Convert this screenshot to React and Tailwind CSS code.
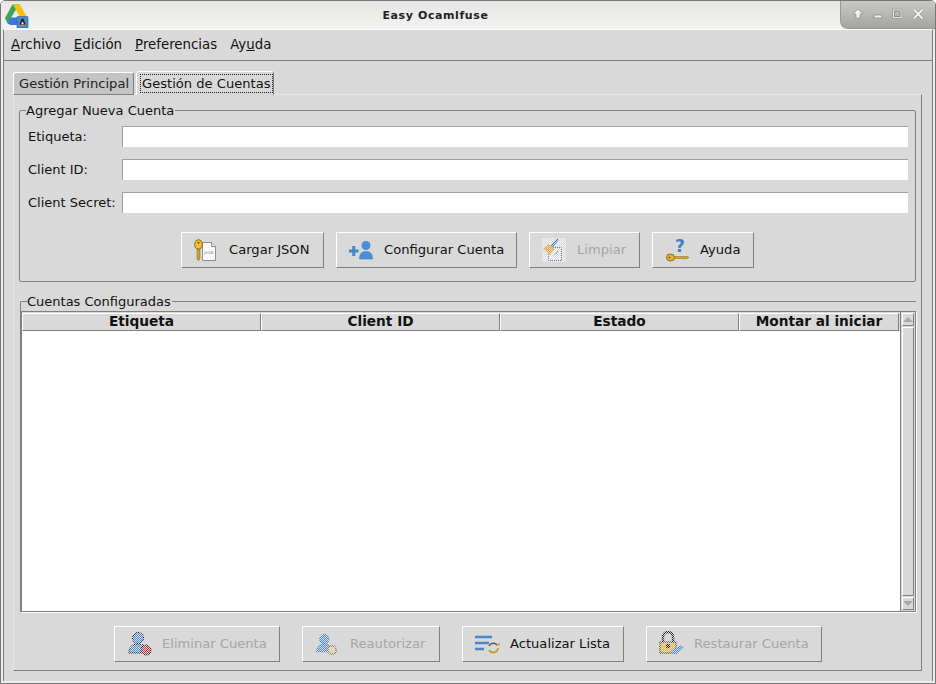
import React from "react";

function Dither({ id }) {
  return (
    <defs>
      <pattern id={id + "p"} width="2" height="2" patternUnits="userSpaceOnUse">
        <rect width="1" height="1" fill="#fff" />
        <rect x="1" y="1" width="1" height="1" fill="#fff" />
      </pattern>
      <mask id={id} maskUnits="userSpaceOnUse" x="0" y="0" width="26" height="26">
        <rect width="26" height="26" fill={`url(#${id}p)`} />
      </mask>
    </defs>
  );
}

function KeyJsonIcon() {
  return (
    <svg width="26" height="22" viewBox="0 0 26 22">
      <path d="M8.500 3.500h9l4 4v14h-13z" fill="#fafafa" stroke="#8f8f8f" />
      <path d="M17.500 3.500v4h4" fill="#e4e4e4" stroke="#8f8f8f" />
      <text x="10" y="14.500" fontSize="3.800" fill="#777" fontFamily="DejaVu Sans">JSON</text>
      <ellipse cx="4.500" cy="5.500" rx="3.800" ry="4.800" fill="#f2c230" stroke="#8a6a10" />
      <circle cx="4.500" cy="3.800" r="1.100" fill="#7a5a10" />
      <path d="M3.200 10h2.600v10l-1.300 1.500-1.300-1.500z" fill="#d9a520" stroke="#8a6a10" strokeWidth=".7" />
    </svg>
  );
}

function AddUserIcon() {
  return (
    <svg width="26" height="20" viewBox="0 0 26 20">
      <path d="M1 11h9.500M5.750 6v10" stroke="#3f86cc" strokeWidth="3" />
      <circle cx="18" cy="5.500" r="4.500" fill="#4a90d9" />
      <path d="M11.500 19c0-5 2-7.500 6.500-7.500s6.500 2.500 6.500 7.500z" fill="#4a90d9" stroke="#3b7dc0" strokeWidth=".6" />
    </svg>
  );
}

function BroomIcon() {
  return (
    <svg width="26" height="26" viewBox="0 0 26 26">
      <Dither id="dm1" />
      <rect width="24" height="24" x="1" y="1" fill="#f4f4f4" mask="url(#dm1)" />
      <g mask="url(#dm1)">
        <path d="M7.500 10.500h13v13h-13z" fill="#fff" stroke="#4a90d9" />
        <path d="M17 2 10 10" stroke="#2a70c0" strokeWidth="2.600" />
        <path d="M2 12l6-5 6 5-5 6z" fill="#e8a81c" />
        <path d="M12 20l5-6" stroke="#4a90d9" />
      </g>
    </svg>
  );
}

function HelpKeyIcon() {
  return (
    <svg width="24" height="26" viewBox="0 0 24 26">
      <text x="9" y="14.500" fontSize="17" fontWeight="700" fill="#3c7fc4" fontFamily="DejaVu Sans">?</text>
      <ellipse cx="4.500" cy="20.500" rx="4" ry="3.500" fill="#eab42a" stroke="#8a6a10" />
      <circle cx="3.500" cy="20.500" r="1" fill="#7a5a10" />
      <path d="M8.500 19.500h12.500l2 1-1 1-2-.3-1 1-1-.8-1 .8-1-.8H8.500z" fill="#d9a520" stroke="#8a6a10" strokeWidth=".5" />
    </svg>
  );
}

function DisabledUserIcon({ id, badge, small }) {
  const line = small ? "#3a6ea5" : "#111";
  return (
    <svg width="26" height="26" viewBox="0 0 26 26">
      <Dither id={id} />
      <g mask={`url(#${id})`}>
        <g transform={small ? "translate(1 2) scale(.85)" : "translate(0 0)"}>
          <circle cx="11" cy="7" r="5.500" fill="#4a90d9" stroke={line} />
          <path d="M2 22c0-6 3-9 9-9s9 3 9 9z" fill="#4a90d9" stroke={line} />
          {badge === "del" ? (
            <circle cx="19" cy="19" r="5" fill="#d03030" stroke="#111" />
          ) : (
            <circle cx="20" cy="20" r="5" fill="#d9d9d9" stroke="#a07a20" strokeWidth="2" />
          )}
        </g>
      </g>
    </svg>
  );
}

function RefreshListIcon() {
  return (
    <svg width="26" height="20" viewBox="0 0 26 20">
      <path d="M1 3h17M1 9h14M1 15h9" stroke="#4a88cc" strokeWidth="2.400" />
      <path d="M15 12a4.800 4.800 0 0 1 8-1" fill="none" stroke="#555" strokeWidth="1.500" />
      <path d="M24 14a4.800 4.800 0 0 1-9 2" fill="none" stroke="#c99a2e" strokeWidth="1.800" />
      <path d="M22 11.500h3.500v-3z" fill="#c99a2e" />
    </svg>
  );
}

function LockIcon() {
  return (
    <svg width="26" height="26" viewBox="0 0 26 26">
      <Dither id="dm4" />
      <g mask="url(#dm4)">
        <path d="M5 11V6a5 5 0 0 1 10 0v5" fill="none" stroke="#222" strokeWidth="2.400" />
        <rect x="2" y="11" width="16" height="11" fill="#efbe2c" stroke="#222" />
        <circle cx="10" cy="15" r="2.200" fill="#111" />
        <path d="M13 20l5 4 8-8-4-2-4 4-2-1z" fill="#4a90d9" />
      </g>
    </svg>
  );
}

function DriveLogo() {
  return (
    <svg width="24" height="24" viewBox="0 0 24 24">
      <path d="M7.500 .5h6.500L5.500 14.500 2.500 19.500 0 14z" fill="#3fa45b" />
      <path d="M8 .5h7l7 12.500h-7z" fill="#f4c20d" />
      <path d="M5.500 13.500H13v7.500H5.500L2.500 19.500z" fill="#3b78d8" />
      <rect x="12" y="12.500" width="11" height="11.500" rx=".5" fill="#4a88cc" stroke="#2d5f9c" strokeWidth=".6" />
      <path d="M17.500 14.500c1.200 0 1.500 1 1.500 2l1.500 3.500-1 1h-4l-1-1 1.500-3.500c0-1 .3-2 1.500-2z" fill="#222" />
      <path d="M17.500 17.500l1.500 2.500h-3z" fill="#fff" />
      <path d="M15.500 20.500h4v1h-4z" fill="#f0b020" />
    </svg>
  );
}

// icons are dithered, so they have to land on whole pixels: padded from the left, not centered
function ActionButton({ icon, label, disabled, className }) {
  return (
    <button
      className={`h-9 shrink-0 flex items-center whitespace-nowrap border border-t-white border-l-white border-r-[#808080] border-b-[#808080] ${className} ${
        disabled ? "text-[#a6a6a6]" : "text-[#111]"
      }`}
    >
      <span className="w-[26px] flex items-center justify-center">{icon}</span>
      <span>{label}</span>
    </button>
  );
}

function Field({ label }) {
  return (
    <div className="flex items-center h-[21px]">
      <label className="w-[94px] shrink-0 whitespace-nowrap text-[13px] text-[#111]">{label}</label>
      <input
        readOnly
        className="h-[21px] w-[786px] shrink-0 bg-white border-t border-l border-t-[#a0a0a0] border-l-[#a0a0a0]"
      />
    </div>
  );
}

function HeaderCell({ label, className }) {
  return (
    <div
      className={`h-[18px] shrink-0 flex items-center justify-center whitespace-nowrap font-bold text-[13.7px] text-[#111] border border-t-white border-l-white border-r-[#808080] border-b-[#808080] ${className}`}
    >
      {label}
    </div>
  );
}

export default function App() {
  return (
    <div className="w-[936px] h-[684px] flex flex-col bg-[#ececea] border border-[#777777] rounded-t-[5px] overflow-hidden font-['DejaVu_Sans',sans-serif] text-[13.33px] leading-none">
      {/* titlebar */}
      <div className="h-[28px] flex bg-gradient-to-b from-[#e6e6e4] to-[#f2f2f0] shrink-0">
        <div className="w-[30px] pl-[4px] pt-[3px]">
          <DriveLogo />
        </div>
        <div className="w-[809px] pt-[9px] text-center font-bold text-[11px] tracking-[0.6px] text-[#222]">
          Easy Ocamlfuse
        </div>
        <div className="flex-1 flex items-center justify-around px-[6px] pb-[2px] rounded-bl-[8px] bg-gradient-to-b from-[#c9c9c5] to-[#a4a4a0] border-l border-b border-[#999]">
          <svg width="12" height="12" viewBox="0 0 12 12">
            <path d="M6 1l5 5H8v4H4V6H1z" fill="#f2f2f2" stroke="#808080" strokeWidth=".6" />
          </svg>
          <svg width="10" height="12" viewBox="0 0 10 12">
            <rect x="1" y="7" width="8" height="3" fill="#efefef" stroke="#808080" strokeWidth=".7" />
          </svg>
          <svg width="11" height="12" viewBox="0 0 11 12">
            <rect x="1" y="1.500" width="8.500" height="8.500" fill="none" stroke="#e4e4e4" strokeWidth="2" />
            <rect x=".5" y="1" width="9.500" height="9.500" fill="none" stroke="#777" strokeWidth=".6" />
            <rect x="2.500" y="3" width="5.500" height="5.500" fill="none" stroke="#777" strokeWidth=".6" />
          </svg>
          <svg width="12" height="12" viewBox="0 0 12 12">
            <path d="M2 1.500l8.500 9M10.500 1.500l-8.500 9" stroke="#808080" strokeWidth="3" />
            <path d="M2 1.500l8.500 9M10.500 1.500l-8.500 9" stroke="#f2f2f2" strokeWidth="2" />
          </svg>
        </div>
      </div>

      {/* window body */}
      <div className="flex-1 flex flex-col mx-[2px] mb-[2px] bg-[#d9d9d9] border-t border-t-white border-l border-r border-l-[#808080] border-r-[#808080] min-h-0">
        <div className="h-[31px] shrink-0 flex items-center gap-[13px] pl-[7px] border-b border-b-[#808080] text-[#111]">
          <span><u>A</u>rchivo</span>
          <span><u>E</u>dición</span>
          <span><u>P</u>referencias</span>
          <span>Ay<u>u</u>da</span>
        </div>

        <div className="flex-1 flex flex-col pt-[10px] pl-[9px] pr-[10px] pb-[10px] min-h-0 text-[13.1px]">
          {/* tabs */}
          <div className="h-[24px] flex items-end shrink-0 relative z-10 -mb-px">
            <div className="h-[23px] w-[121px] flex items-center pl-[5px] whitespace-nowrap bg-[#c4c4c4] border-t border-l border-r border-t-white border-l-white border-r-[#808080] border-b border-b-[#808080] rounded-t-[3px] text-[#222]">
              Gestión Principal
            </div>
            <div className="ml-[2px] h-[24px] w-[138px] flex items-center pl-[3px] whitespace-nowrap bg-[#d9d9d9] border-t border-l border-r border-t-white border-l-white border-r-[#808080] rounded-t-[3px] text-[#111]">
              <span className="border border-dotted border-[#222] px-px py-[2px]">Gestión de Cuentas</span>
            </div>
          </div>

          {/* pane */}
          <div className="flex-1 flex flex-col border border-t-[#e8e8e8] border-l-[#e8e8e8] border-r-[#808080] border-b-[#808080] pl-[5px] pr-[5px] min-h-0">
            {/* add account */}
            <div className="relative mt-[15px] h-[172px] shrink-0 border border-[#808080] rounded-[2px] pl-[8px] pt-[15px]">
              <span className="absolute -top-[7px] left-[6px] bg-[#d9d9d9] pr-px text-[13px] text-[#111]">Agregar Nueva Cuenta</span>
              <div className="flex flex-col gap-[12px]">
                <Field label="Etiqueta:" />
                <Field label="Client ID:" />
                <Field label="Client Secret:" />
              </div>
              <div className="flex gap-[12px] mt-[19px] pl-[153px]">
                <ActionButton icon={<KeyJsonIcon />} label="Cargar JSON" className="w-[143px] pl-[12px] gap-[9px]" />
                <ActionButton icon={<AddUserIcon />} label="Configurar Cuenta" className="w-[181px] pl-[11px] gap-[10px]" />
                <ActionButton icon={<BroomIcon />} label="Limpiar" disabled className="w-[111px] pl-[11px] gap-[10px]" />
                <ActionButton icon={<HelpKeyIcon />} label="Ayuda" className="w-[102px] pl-[12px] gap-[9px]" />
              </div>
            </div>

            {/* accounts */}
            <div className="relative mt-[19px] h-[311px] shrink-0 ml-px border-t border-l border-[#808080] rounded-tl-[2px] pt-[9px] flex flex-col">
              <span className="absolute -top-[7px] left-[6px] bg-[#d9d9d9] pr-px text-[13px] text-[#111]">Cuentas Configuradas</span>
              <div className="flex-1 flex border border-[#808080] bg-white min-h-0 shadow-[1px_1px_0_#ffffff]">
                <div className="flex-1 flex flex-col border-t border-[#d9d9d9]">
                  <div className="flex bg-[#d9d9d9]">
                    <HeaderCell label="Etiqueta" className="w-[239px]" />
                    <HeaderCell label="Client ID" className="w-[239px]" />
                    <HeaderCell label="Estado" className="w-[239px]" />
                    <HeaderCell label="Montar al iniciar" className="w-[160px]" />
                  </div>
                </div>
                <div className="w-[15px] flex flex-col bg-[#d9d9d9] border-l border-[#808080] p-px">
                  <div className="h-[13px] flex items-center justify-center border border-t-white border-l-white border-r-[#808080] border-b-[#808080]">
                    <div className="w-0 h-0 border-x-[5px] border-x-transparent border-b-[5px] border-b-[#a8a8a8]" />
                  </div>
                  <div className="flex-1 border border-t-white border-l-white border-r-[#808080] border-b-[#808080] my-px" />
                  <div className="h-[13px] flex items-center justify-center border border-t-white border-l-white border-r-[#808080] border-b-[#808080]">
                    <div className="w-0 h-0 border-x-[5px] border-x-transparent border-t-[5px] border-t-[#a8a8a8]" />
                  </div>
                </div>
              </div>
            </div>

            {/* bottom buttons */}
            <div className="flex gap-[22px] mt-[14px] pl-[95px]">
              <ActionButton icon={<DisabledUserIcon id="dm2" badge="del" />} label="Eliminar Cuenta" disabled className="w-[166px] pl-[12px] gap-[9px]" />
              <ActionButton icon={<DisabledUserIcon id="dm3" badge="ref" small />} label="Reautorizar" disabled className="w-[138px] pl-[11px] gap-[10px]" />
              <ActionButton icon={<RefreshListIcon />} label="Actualizar Lista" className="w-[162px] pl-[11px] gap-[10px]" />
              <ActionButton icon={<LockIcon />} label="Restaurar Cuenta" disabled className="w-[176px] pl-[11px] gap-[10px]" />
            </div>
          </div>
        </div>
      </div>
    </div>
  );
}
